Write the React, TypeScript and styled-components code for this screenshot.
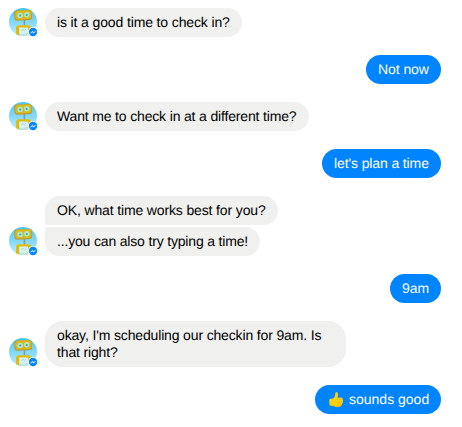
import React from "react";
import styled, { createGlobalStyle } from "styled-components";

const GlobalStyle = createGlobalStyle`
  * { box-sizing: border-box; }
  body {
    margin: 0;
    background: #fff;
    font-family: "Liberation Sans", Arial, sans-serif;
    font-size: 14px;
    line-height: 17px;
    text-rendering: geometricPrecision;
  }
`;

const Thread = styled.main`
  display: flex;
  flex-direction: column;
  gap: 18px;
  width: 462px;
  height: 427px;
  padding: 8px 21px 0 9px;
`;

const Row = styled.div<{ $own?: boolean }>`
  display: flex;
  align-items: flex-end;
  justify-content: ${(p) => (p.$own ? "flex-end" : "flex-start")};
  gap: 8px;
`;

const Stack = styled.div`
  display: flex;
  flex-direction: column;
  align-items: flex-start;
  gap: 2px;
`;

const Bubble = styled.div<{ $own?: boolean; $w: number; $radius?: string; $track?: number }>`
  display: flex;
  align-items: center;
  width: ${(p) => p.$w}px;
  padding: 6px 0 6px 12px;
  border-radius: ${(p) => p.$radius || "15px"};
  background: ${(p) => (p.$own ? "#0084ff" : "#f0f0ef")};
  color: ${(p) => (p.$own ? "#fff" : "#000")};
  letter-spacing: ${(p) => p.$track || 0}px;
  white-space: pre;
`;

const Picture = styled.svg`
  display: block;
  flex: none;
  width: 29px;
  height: 29px;
  margin: 0 -1px 0 0;
  overflow: visible;
`;

const Thumb = styled.svg`
  flex: none;
  width: 16px;
  height: 17px;
  margin: 0 5px 0 1px;
`;

function Avatar() {
  const id = React.useId();
  return (
    <Picture viewBox="0 0 29 29">
      <defs>
        <clipPath id={`${id}c`}>
          <circle cx="14" cy="14" r="14" />
        </clipPath>
        <linearGradient id={`${id}g`} x1="0" y1="0" x2="0" y2="1">
          <stop offset="0" stopColor="#49c3f3" />
          <stop offset="1" stopColor="#c0edfb" />
        </linearGradient>
      </defs>
      <g clipPath={`url(#${id}c)`}>
        <rect width="28" height="28" fill={`url(#${id}g)`} />
        <path d="M15.4 12v5.5" stroke="#8c9a9a" strokeWidth="1.6" />
        <rect x="5.4" y="2.2" width="17.6" height="10.2" rx="3" fill="#b99a35" transform="rotate(-3 14 8)" />
        <rect x="6.4" y="2.6" width="16" height="8.6" rx="2.4" fill="#dcb915" transform="rotate(-3 14 8)" />
        <circle cx="11.1" cy="7.4" r="2.7" fill="#a4ebe0" />
        <circle cx="17.8" cy="6.8" r="2.7" fill="#a4ebe0" />
        <circle cx="11.2" cy="7.4" r="1" fill="#489f9a" />
        <circle cx="17.7" cy="6.9" r="1" fill="#489f9a" />
        <path d="M7 28V20q0-2.8 2.8-2.8h9.4q2.8 0 2.8 2.8v8z" fill="#dcbd0c" />
        <path d="M10.2 19.6h8.8v5.5q-4 2-8.8 1z" fill="#d7f2f5" />
        <path d="M12 23l2-2 1.3 2 1.7-2" fill="none" stroke="#a3d0d3" strokeWidth="0.7" />
        <path d="M10.2 25.8h10v2.2h-10z" fill="#b9e6f3" />
      </g>
      <circle cx="24" cy="24" r="5.1" fill="#fff" />
      <circle cx="24" cy="24" r="4.2" fill="#0084ff" />
      <path d="M21.5 25.2l1.9-2 1.3 1.2 1.8-1.2-1.8 2.1-1.3-1.2z" fill="#fff" stroke="#fff" strokeWidth="0.4" />
    </Picture>
  );
}

function ThumbsUp() {
  return (
    <Thumb viewBox="0 0 16 17">
      <path
        d="M1.2 9.3Q1.2 8 2.6 7.8L5 7.4Q7.3 5.8 7.3 2.9Q7.2 1.3 8.2 1.1Q9.9 1 10.1 3Q10.2 4.6 9.5 6.7L13.4 6.6Q14.8 6.8 14.6 8Q15.6 8.8 14.9 10Q15.4 11.1 14.4 12Q14.7 13.2 13.6 13.9Q13.5 15.3 12.2 15.6Q8.2 16.6 5.9 14.9L3 14.7Q1.7 14.6 1.5 13.4Z"
        fill="#ffcf0a"
      />
      <path d="M10.8 9.1l3.8-.3M10.8 11.5l3.6-.2M10.8 13.8l2.7-.2" stroke="#e9ae0d" strokeWidth="0.5" />
      <path d="M1.6 13.6q.4 1 1.5 1.1l2.8.2q2.3 1.6 6.3.7" fill="none" stroke="#e5a914" strokeWidth="0.5" />
    </Thumb>
  );
}

export default function App() {
  return (
    <>
      <GlobalStyle />
      <Thread>
        <Row>
          <Avatar />
          <Bubble $w={197} $track={-0.13}>is it a good time to check in?</Bubble>
        </Row>
        <Row $own>
          <Bubble $own $w={75} $track={-0.07}>Not now</Bubble>
        </Row>
        <Row>
          <Avatar />
          <Bubble $w={264} $track={-0.16}>Want me to check in at a different time?</Bubble>
        </Row>
        <Row $own>
          <Bubble $own $w={119} $track={-0.12}>let's plan a time</Bubble>
        </Row>
        <Row>
          <Avatar />
          <Stack>
            <Bubble $w={233} $radius="15px 15px 15px 4px" $track={-0.14}>OK, what time works best for you?</Bubble>
            <Bubble $w={215} $radius="4px 15px 15px 15px" $track={-0.17}>...you can also try typing a time!</Bubble>
          </Stack>
        </Row>
        <Row $own>
          <Bubble $own $w={51}>9am</Bubble>
        </Row>
        <Row>
          <Avatar />
          <Bubble $w={301} $radius="18px" $track={-0.15}>{"okay, I'm scheduling our checkin for 9am. Is\nthat right?"}</Bubble>
        </Row>
        <Row $own>
          <Bubble $own $w={126}>
            <ThumbsUp />
            sounds good
          </Bubble>
        </Row>
      </Thread>
    </>
  );
}
